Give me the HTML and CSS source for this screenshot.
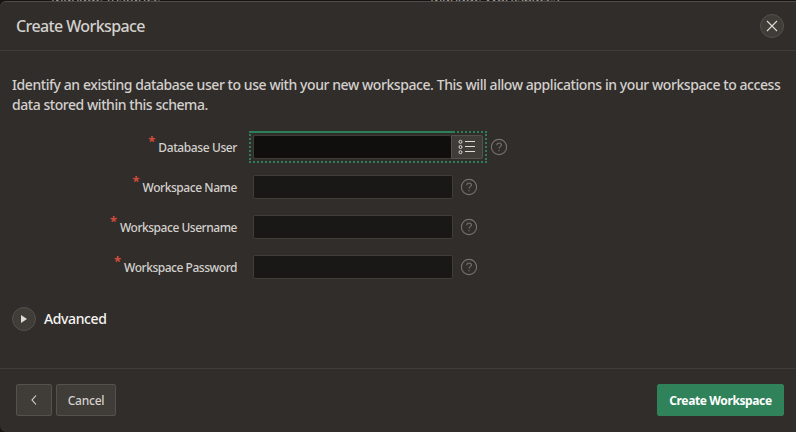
FILE: index.html
```html
<!DOCTYPE html>
<html lang="en">
<head>
<meta charset="utf-8">
<title>Create Workspace</title>
<link rel="stylesheet" href="styles.css">
</head>
<body>
<div class="backdrop"><span class="tile-name instance">Manage Instance</span><span class="tile-name workspaces">Manage Workspaces</span></div>
<main class="dialog">
  <header class="dialog-header">
    <h1>Create Workspace</h1>
    <button class="round close" aria-label="Close"><svg width="12" height="12" viewBox="0 0 12 12"><path d="M1 1l10 10M11 1L1 11"/></svg></button>
  </header>
  <section class="dialog-body">
    <p class="intro"><span class="line-one">Identify an existing database user to use with your new workspace. This will allow applications in your workspace to access</span><br><span class="line-two">data stored within this schema.</span></p>
    <form class="fields">
      <div class="field"><label><i>*</i><span class="l1">Database User</span></label>
        <div class="picker"><div class="input active"></div><button type="button" class="list" aria-label="List"><svg width="18" height="16" viewBox="0 0 18 16"><g class="dots"><circle cx="2.5" cy="2.8" r="1.5"/><circle cx="2.5" cy="8" r="1.5"/><circle cx="2.5" cy="13.200" r="1.5"/></g><path d="M7 2.5h10M7 7.5h10M7 12.5h10"/></svg></button></div>
        <svg class="help" width="18" height="18" viewBox="0 0 18 18"><circle cx="9" cy="9" r="7.6"/><path d="M6.8 7.2c0-3 4.6-2.8 4.6-.1C11.400 8.700 9 8.700 9 10.700M9 12.100v1.200"/></svg></div>
      <div class="field"><label><i>*</i><span class="l2">Workspace Name</span></label><div class="input"></div>
        <svg class="help" width="18" height="18" viewBox="0 0 18 18"><circle cx="9" cy="9" r="7.6"/><path d="M6.8 7.2c0-3 4.6-2.8 4.6-.1C11.400 8.700 9 8.700 9 10.700M9 12.100v1.200"/></svg></div>
      <div class="field"><label><i>*</i><span class="l3">Workspace Username</span></label><div class="input"></div>
        <svg class="help" width="18" height="18" viewBox="0 0 18 18"><circle cx="9" cy="9" r="7.6"/><path d="M6.8 7.2c0-3 4.6-2.8 4.6-.1C11.400 8.700 9 8.700 9 10.700M9 12.100v1.200"/></svg></div>
      <div class="field"><label><i>*</i><span class="l4">Workspace Password</span></label><div class="input"></div>
        <svg class="help" width="18" height="18" viewBox="0 0 18 18"><circle cx="9" cy="9" r="7.6"/><path d="M6.8 7.2c0-3 4.6-2.8 4.6-.1C11.400 8.700 9 8.700 9 10.700M9 12.100v1.200"/></svg></div>
    </form>
    <div class="advanced"><button class="round" aria-label="Expand"><svg class="play" width="8" height="10" viewBox="0 0 8 10"><path d="M1 1v8l6-4z"/></svg></button><h2>Advanced</h2></div>
  </section>
  <footer class="dialog-footer">
    <button class="button back" aria-label="Back"><svg width="8" height="12" viewBox="0 0 8 12"><path d="M6 1.500L2 6l4 4.500"/></svg></button>
    <button class="button cancel"><span>Cancel</span></button>
    <button class="button create"><span>Create Workspace</span></button>
  </footer>
</main>
</body>
</html>
```

FILE: styles.css
```css
* { box-sizing: border-box; }
body {
  margin: 0;
  width: 796px;
  height: 432px;
  overflow: hidden;
  background: #161312;
  color: #d3d0cd;
  font-family: "Noto Sans", "Open Sans", sans-serif;
}
button { padding: 0; font: inherit; color: inherit; }
.backdrop { display: flex; height: 1px; overflow: hidden; color: #a09c99; font-size: 14px; line-height: 20px; }
.tile-name { flex: none; margin-top: -13px; white-space: nowrap; }
.instance { width: 379px; margin-left: 51px; letter-spacing: -.28px; }
.workspaces { letter-spacing: -.4px; }
.dialog {
  display: flex;
  flex-direction: column;
  height: 431px;
  border-top: 1px solid #514d49;
  border-radius: 6px 0 0 6px;
  background: #312d2a;
}
.dialog-header {
  display: flex;
  align-items: center;
  justify-content: space-between;
  height: 49px;
  padding: 0 12px 0 16px;
  border-bottom: 1px solid #403c38;
}
h1 { margin: 0; font-size: 16px; line-height: 24px; font-weight: 500; letter-spacing: -.6px; }
.round {
  display: flex;
  align-items: center;
  justify-content: center;
  width: 24px;
  height: 24px;
  border: 1px solid #55514c;
  border-radius: 50%;
  background: #403c38;
}
.round svg, .back svg { fill: none; stroke: #dedbd8; stroke-width: 1.1; }
.round .play { fill: #dedbd8; stroke: none; }
.dialog-body { flex: 1; padding: 24px 12px 0; }
.intro { margin: 0; height: 40px; font-size: 14px; font-weight: 500; line-height: 20px; white-space: nowrap; }
.line-one { letter-spacing: -.43px; }
.line-two { letter-spacing: -.45px; }
.fields { display: grid; grid-auto-rows: 40px; margin-top: 12px; }
.field { display: flex; align-items: center; }
label { display: flex; justify-content: flex-end; width: 225px; margin-right: 16px; padding-top: 2px; font-size: 12px; font-weight: 500; line-height: 16px; white-space: nowrap; }
label i { color: #d34c3c; font-size: 13px; font-weight: 700; line-height: 16px; font-style: normal; margin: -7px 3px 7px 0; }
.l1 { letter-spacing: -.4px; }
.l2 { letter-spacing: -.44px; }
.l3, .l4 { letter-spacing: -.47px; }
.input { width: 200px; height: 24px; border: 1px solid #403c38; border-radius: 2px; background: #191816; }
.picker { position: relative; display: flex; width: 230px; height: 24px; }
.picker::before { content: ""; position: absolute; inset: -4px; border: 2px dotted #2c8058; }
.picker::after { content: ""; position: absolute; left: -2px; top: -4px; width: 203px; height: 2px; background: #2c8058; }
.active { width: 198px; background: #100f0e; border-right: 0; }
.list { display: flex; align-items: center; justify-content: center; width: 32px; height: 24px; border: 1px solid #55514c; border-radius: 0 2px 2px 0; background: #403c38; }
.list svg { fill: none; stroke: #dedbd8; stroke-width: 1; }
.help { margin-left: 7px; fill: none; stroke: #77726e; stroke-width: 1.1; }
.advanced { display: flex; align-items: center; gap: 8px; margin-top: 20px; height: 24px; }
h2 { margin: 0; color: #f5f4f2; font-size: 14px; font-weight: 500; line-height: 20px; letter-spacing: -.38px; }
.dialog-footer { display: flex; align-items: center; gap: 4px; height: 64px; padding: 0 12px 1px 16px; border-top: 1px solid #403c38; }
.button { display: flex; align-items: center; justify-content: center; height: 32px; border: 1px solid #55514c; border-radius: 2px; background: #403c38; font-size: 12px; font-weight: 500; line-height: 16px; white-space: nowrap; }
.back { width: 36px; }
.cancel { width: 60px; letter-spacing: -.25px; }
.cancel span, .create span { padding-top: 1px; }
.create { width: 127px; margin-left: auto; border-color: #2f8259; background: #2f8259; color: #fff; font-weight: 700; letter-spacing: -.38px; }
```
